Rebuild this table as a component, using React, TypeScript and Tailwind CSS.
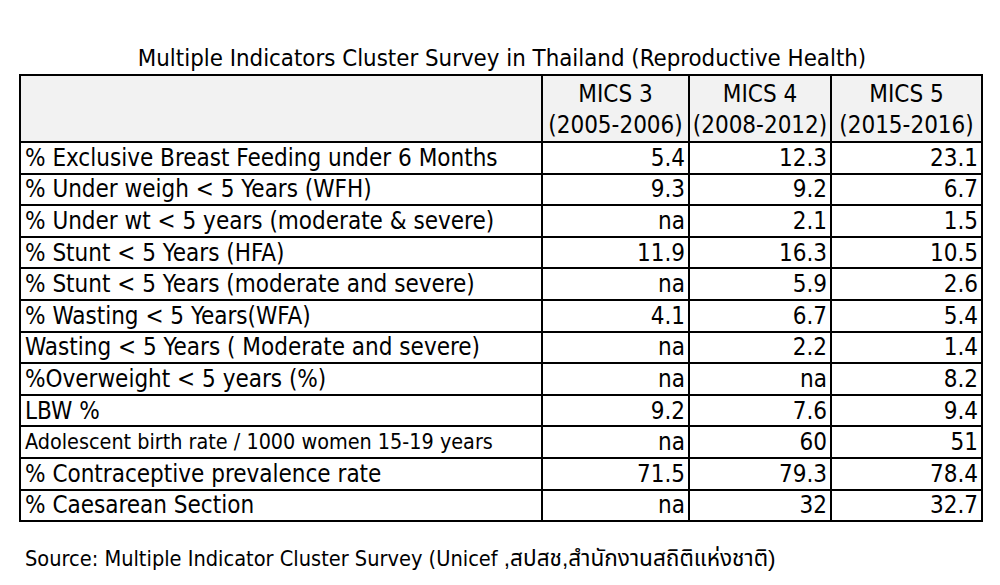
const rows: [string, string, string, string][] = [
  ['% Exclusive Breast Feeding under 6 Months', '5.4', '12.3', '23.1'],
  ['% Under weigh < 5 Years (WFH)', '9.3', '9.2', '6.7'],
  ['% Under wt < 5 years (moderate & severe)', 'na', '2.1', '1.5'],
  ['% Stunt < 5 Years (HFA)', '11.9', '16.3', '10.5'],
  ['% Stunt < 5 Years (moderate and severe)', 'na', '5.9', '2.6'],
  ['% Wasting < 5 Years(WFA)', '4.1', '6.7', '5.4'],
  ['Wasting < 5 Years ( Moderate and severe)', 'na', '2.2', '1.4'],
  ['%Overweight < 5 years (%)', 'na', 'na', '8.2'],
  ['LBW %', '9.2', '7.6', '9.4'],
  ['Adolescent birth rate / 1000 women 15-19 years', 'na', '60', '51'],
  ['% Contraceptive prevalence rate', '71.5', '79.3', '78.4'],
  ['% Caesarean Section', 'na', '32', '32.7'],
]

const headers = [
  ['MICS 3', '(2005-2006)'],
  ['MICS 4', '(2008-2012)'],
  ['MICS 5', '(2015-2016)'],
]

export default function App() {
  return (
    <div className="w-[1000px] h-[585px] bg-white text-black overflow-hidden font-['DejaVu_Sans_Condensed','DejaVu_Sans',sans-serif]">
      <h1 className="pt-[44px] h-[74px] text-center text-[23.8px] leading-[28px] pl-[4px]">
        Multiple Indicators Cluster Survey in Thailand (Reproductive Health)
      </h1>

      <table className="ml-[19px] w-[962px] table-fixed border-collapse border-2 border-black text-[24px] leading-[28px]">
        <colgroup>
          <col className="w-[522px]" />
          <col className="w-[147px]" />
          <col className="w-[142px]" />
          <col className="w-[151px]" />
        </colgroup>
        <thead>
          <tr className="h-[67px] bg-[#f2f2f2]">
            <th className="border-2 border-black" />
            {headers.map(([a, b]) => (
              <th key={a} className="border-2 border-black font-normal text-center leading-[31px] pt-[2px] whitespace-nowrap">
                <div>{a}</div>
                <div>{b}</div>
              </th>
            ))}
          </tr>
        </thead>
        <tbody>
          {rows.map(([label, a, b, c]) => (
            <tr key={label} className="h-[31.6px]">
              <td className={`border-2 border-black pl-[4px] whitespace-nowrap overflow-hidden ${label.startsWith('Adolescent') ? 'text-[21.4px]' : ''}`}>
                {label}
              </td>
              <td className="border-2 border-black text-right pr-[3px]">{a}</td>
              <td className="border-2 border-black text-right pr-[3px]">{b}</td>
              <td className="border-2 border-black text-right pr-[3px]">{c}</td>
            </tr>
          ))}
        </tbody>
      </table>

      <p className="pl-[25px] pt-[23px] text-[21.6px] leading-[28px]">
        Source: Multiple Indicator Cluster Survey (Unicef{' '}
        <span className="text-[22.6px] font-['Liberation_Sans','Noto_Sans_Thai','Noto_Sans',sans-serif]">,สปสช,สำนักงานสถิติแห่งชาติ)</span>
      </p>
    </div>
  )
}
